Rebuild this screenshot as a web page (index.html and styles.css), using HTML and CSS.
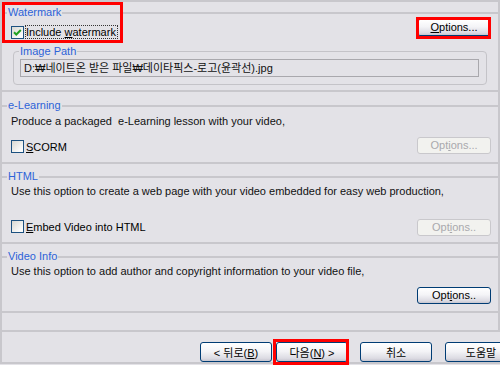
FILE: index.html
```html
<!DOCTYPE html>
<html lang="ko">
<head>
  <meta charset="UTF-8">
  <link rel="stylesheet" href="styles.css">
  <title>Video options</title>
</head>
<body>
  <div class="dialog">
    <div class="panel">
      <fieldset class="group group-watermark">
        <legend>Watermark</legend>
        <div class="row row-watermark">
          <label class="check check-main">
            <span class="box">
              <svg width="11" height="11" viewBox="0 0 11 11"><path d="M2 5.2 L4.3 7.5 L8.8 3" fill="none" stroke="#21a121" stroke-width="2"/></svg>
            </span>
            <span class="focus">Include <u>w</u>atermark</span>
          </label>
          <button class="btn"><u>O</u>ptions...</button>
        </div>
        <fieldset class="subgroup">
          <legend>Image Path</legend>
          <div class="field">D:₩네이트온 받은 파일₩데이타픽스-로고(윤곽선).jpg</div>
        </fieldset>
      </fieldset>

      <fieldset class="group group-elearning">
        <legend>e-Learning</legend>
        <p class="desc">Produce a packaged&nbsp; e-Learning lesson with your video,</p>
        <div class="row row-scorm">
          <label class="check"><span class="box"></span><span><u>S</u>CORM</span></label>
          <button class="btn" disabled>Opt<u>i</u>ons...</button>
        </div>
      </fieldset>

      <fieldset class="group group-html">
        <legend>HTML</legend>
        <p class="desc">Use this option to create a web page with your video embedded for easy web production,</p>
        <div class="row row-embed">
          <label class="check"><span class="box"></span><span><u>E</u>mbed Video into HTML</span></label>
          <button class="btn" disabled>Opt<u>i</u>ons..</button>
        </div>
      </fieldset>

      <fieldset class="group group-info">
        <legend>Video Info</legend>
        <p class="desc">Use this option to add author and copyright information to your video file,</p>
        <div class="row row-info">
          <button class="btn">Opt<u>i</u>ons..</button>
        </div>
      </fieldset>
    </div>

    <div class="buttons">
      <button class="dlg-btn btn-back">&lt; 뒤로(<u>B</u>)</button>
      <button class="dlg-btn btn-next">다음(<u>N</u>) &gt;</button>
      <button class="dlg-btn btn-cancel">취소</button>
      <button class="dlg-btn btn-help">도움말</button>
    </div>
  </div>

  <div class="mark mark-watermark"></div>
  <div class="mark mark-options"></div>
  <div class="mark mark-next"></div>
</body>
</html>
```

FILE: styles.css
```css
* {
  box-sizing: border-box;
}

body {
  margin: 0;
  width: 500px;
  height: 365px;
  overflow: hidden;
  position: relative;
  background-color: #e3e2e7;
  font-family: "Liberation Sans", "Noto Sans CJK KR", sans-serif;
  font-size: 11px;
  color: #000;
}

.dialog {
  height: 364px;
  border-left: 2px solid #c8c7cc;
  border-bottom: 2px solid #c8c7cc;
}

.panel {
  height: 332px;
  padding-top: 4px;
  border-top: 2px solid #c8c7cc;
  border-right: 2px solid #c8c7cc;
  border-bottom: 2px solid #c8c7cc;
}

/* section frames */
.group {
  margin: 0;
  padding: 0 7px 0 5px;
  min-width: 0;
  border: 0;
  border-top: 2px solid #c8c7cc;
  border-bottom: 2px solid #c8c7cc;
}

.group legend,
.subgroup legend {
  padding: 0 1px;
  line-height: 13px;
  color: #2d62d8;
}

.group-watermark {
  padding-bottom: 5px;
}

.group-elearning {
  margin-top: 7px;
  padding-bottom: 8px;
}

.group-html {
  margin-top: 6px;
  padding-bottom: 6px;
}

.group-info {
  margin-top: 6px;
  padding-bottom: 7px;
}

.desc {
  margin: 2px 0 0 4px;
  line-height: 13px;
  color: #111;
}

.group-elearning .desc {
  margin-top: 3px;
}

.row {
  display: flex;
  justify-content: space-between;
  align-items: flex-start;
  padding-left: 4px;
}

.row-scorm {
  margin-top: 9px;
}

.row-scorm .check {
  margin-top: 3px;
}

.row-embed {
  margin-top: 21px;
}

.row-embed .check {
  margin-top: 1px;
}

.row-info {
  margin-top: 9px;
  justify-content: flex-end;
}

/* checkboxes */
.check {
  display: flex;
  align-items: center;
  gap: 2px;
  line-height: 12px;
}

.check-main {
  margin-top: 6px;
  gap: 0;
}

.box {
  width: 13px;
  height: 13px;
  display: flex;
  align-items: center;
  justify-content: center;
  border: 1px solid #1c5180;
  background: linear-gradient(135deg, #d8d8d2, #fbfbfb 80%);
}

.focus {
  margin-left: 1px;
  padding: 0 1px 0 0;
  border: 1px dotted #333;
}

/* buttons */
.btn {
  width: 74px;
  height: 17px;
  padding: 0;
  font-family: "Liberation Sans", "Noto Sans CJK KR", sans-serif;
  font-size: 11px;
  line-height: 15px;
  color: #000;
  border: 1px solid #003c74;
  border-radius: 3px;
  background: linear-gradient(#ffffff, #f4f4f7 45%, #dcdbe3 85%, #c6c5cf);
}

.btn:disabled {
  color: #a9a9ad;
  border-color: #c9c8cc;
  background: #f2f2ef;
}

.subgroup {
  margin: 6px 4px 0 6px;
  padding: 0 7px 7px 5px;
  min-width: 0;
  border: 1px solid #c4c3c8;
  border-radius: 4px;
}

.field {
  margin: 1px 0 0 1px;
  height: 18px;
  padding-left: 3px;
  line-height: 16px;
  border: 1px solid #a9a8ad;
  color: #111;
  white-space: nowrap;
}

/* dialog buttons */
.buttons {
  display: flex;
  margin-top: 10px;
  padding-left: 198px;
}

.dlg-btn {
  flex: none;
  width: 72px;
  height: 20px;
  padding: 0;
  font-family: "Liberation Sans", "Noto Sans CJK KR", sans-serif;
  font-size: 11px;
  color: #000;
  border: 1px solid #003c74;
  border-radius: 3px;
  background: linear-gradient(#ffffff, #f4f4f7 45%, #dcdbe3 85%, #c6c5cf);
}

.btn-next {
  margin-left: 4px;
}

.btn-cancel {
  margin-left: 12px;
}

.btn-help {
  margin-left: 13px;
}

/* highlight frames drawn over the dialog */
.mark {
  position: absolute;
  border: 3px solid #ff0000;
}

.mark-watermark {
  left: 2px;
  top: 2px;
  width: 121px;
  height: 41px;
}

.mark-options {
  left: 416px;
  top: 17px;
  width: 75px;
  height: 22px;
}

.mark-next {
  left: 273px;
  top: 339px;
  width: 76px;
  height: 26px;
}
```
